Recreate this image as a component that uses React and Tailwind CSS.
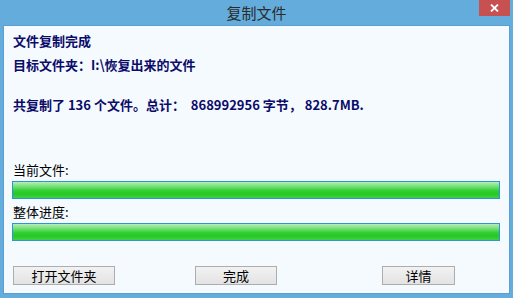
import React from 'react';

const CJK = { fontFamily: '"Noto Sans CJK SC", "Liberation Sans", sans-serif' };

const Bar = () => (
  <div className="ml-[8px] w-[488px] h-[18px] border border-[#2b94dc] bg-[linear-gradient(to_bottom,#b4f0b4_0%,#7fe07f_25%,#2fd02f_55%,#26c826_75%,#3fd23f_100%)]"></div>
);

const Btn = ({ w, children }) => (
  <button
    className={`${w} h-[19px] border border-[#adadad] bg-[linear-gradient(to_bottom,#f2f2f2,#e3e3e3)] text-[13px] leading-[17px] text-black flex items-center justify-center`}
  >
    {children}
  </button>
);

export default function App() {
  return (
    <div className="w-[513px] h-[298px] bg-[#63acdc] flex flex-col overflow-hidden" style={CJK}>
      {/* title bar */}
      <div className="relative h-[25px] flex items-center justify-center">
        <span className="text-[15px] text-[#2b2b2b] leading-none -mt-[1px]">复制文件</span>
        <div className="absolute right-[3px] top-0 w-[31px] h-[16px] bg-[#c75050] flex items-center justify-center">
          <svg width="9" height="8" viewBox="0 0 9 8">
            <path d="M1 0.5 L8 7.5 M8 0.5 L1 7.5" stroke="#fff" strokeWidth="1.8" />
          </svg>
        </div>
      </div>

      {/* client area */}
      <div className="mx-[3px] mb-[4px] flex-1 bg-[#f5faff] border border-[#5b9fd2] flex flex-col pt-[7px]">
        <div className="ml-[9px] text-[13px] leading-[16px] font-bold text-[#0b0b6a]">文件复制完成</div>
        <div className="ml-[9px] mt-[8px] text-[13px] leading-[16px] font-bold text-[#0b0b6a]">目标文件夹：I:\恢复出来的文件</div>
        <div className="ml-[9px] mt-[24px] text-[13px] leading-[16px] font-bold text-[#0b0b6a] whitespace-pre">
          共复制了 136 个文件。总计：  868992956 字节， 828.7MB.
        </div>

        <div className="ml-[9px] mt-[49px] text-[13px] leading-[16px] text-black">当前文件:</div>
        <div className="mt-[3px]"><Bar /></div>
        <div className="ml-[9px] mt-[5px] text-[13px] leading-[16px] text-black">整体进度:</div>
        <div className="mt-[3px]"><Bar /></div>

        <div className="mt-[25px] flex ml-[9px]">
          <Btn w="w-[102px]">打开文件夹</Btn>
          <div className="ml-[80px]"><Btn w="w-[82px]">完成</Btn></div>
          <div className="ml-[105px]"><Btn w="w-[73px]">详情</Btn></div>
        </div>
      </div>
    </div>
  );
}
